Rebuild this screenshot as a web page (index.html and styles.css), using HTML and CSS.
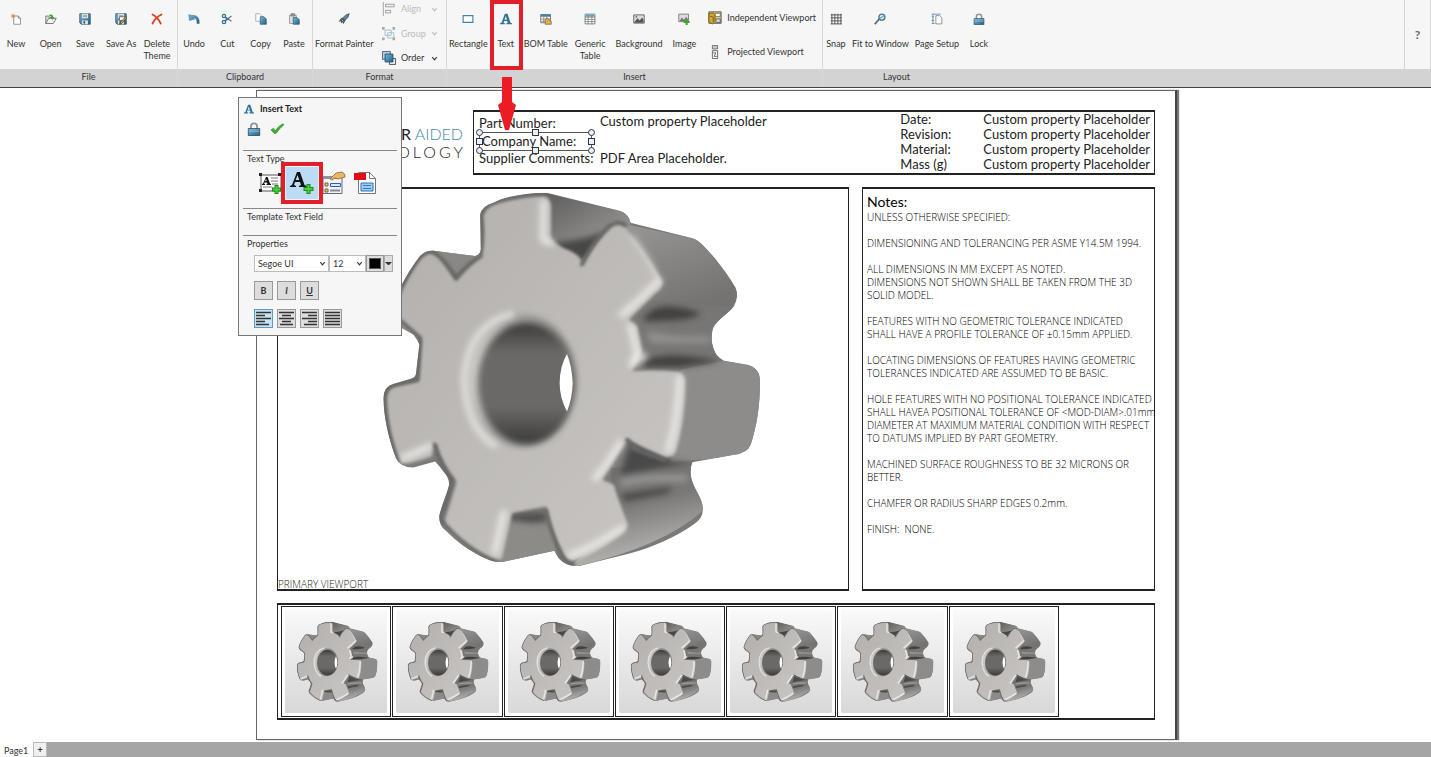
FILE: index.html
```html
<!DOCTYPE html>
<html lang="en">
<head>
    <meta charset="UTF-8">
    <meta name="viewport" content="width=device-width, initial-scale=1.0">
    <title>Template Editor</title>
    <link rel="stylesheet" href="styles.css">
</head>
<body>
    <svg class="defs" aria-hidden="true">
        <defs>
            <linearGradient id="blue" x1="0" y1="0" x2="1" y2="1">
                <stop offset="0" stop-color="#7fb9d6"/>
                <stop offset="1" stop-color="#1c5f86"/>
            </linearGradient>
            <linearGradient id="face" x1="0" y1="0" x2="1" y2="1">
                <stop offset="0" stop-color="#b1aeab"/>
                <stop offset="0.55" stop-color="#bfbcb9"/>
                <stop offset="1" stop-color="#c9c6c3"/>
            </linearGradient>
            <linearGradient id="side" x1="0" y1="0" x2="1" y2="1">
                <stop offset="0" stop-color="#5c5b59"/>
                <stop offset="0.6" stop-color="#868583"/>
                <stop offset="1" stop-color="#a3a19f"/>
            </linearGradient>
            <linearGradient id="tooth" x1="0" y1="0" x2="0.5" y2="1">
                <stop offset="0" stop-color="#9b9997"/>
                <stop offset="1" stop-color="#747371"/>
            </linearGradient>
            <linearGradient id="low" x1="0" y1="0" x2="0.3" y2="1">
                <stop offset="0" stop-color="#6a6967"/>
                <stop offset="0.5" stop-color="#7a7977"/>
                <stop offset="1" stop-color="#bab8b5"/>
            </linearGradient>
            <linearGradient id="bore" x1="0" y1="0" x2="0" y2="1">
                <stop offset="0" stop-color="#3b3a39"/>
                <stop offset="0.25" stop-color="#6a6967"/>
                <stop offset="0.7" stop-color="#6a6967"/>
                <stop offset="1" stop-color="#3b3a39"/>
            </linearGradient>
            <linearGradient id="bevel" x1="0" y1="0.3" x2="1" y2="0.5">
                <stop offset="0" stop-color="#d4d2cf"/>
                <stop offset="0.35" stop-color="#a09e9b"/>
                <stop offset="1" stop-color="#777572"/>
            </linearGradient>
            <filter id="soft4" x="-20%" y="-20%" width="140%" height="140%"><feGaussianBlur stdDeviation="4"/></filter>
            <filter id="soft9" x="-20%" y="-20%" width="140%" height="140%"><feGaussianBlur stdDeviation="9"/></filter>
            <clipPath id="outline">
                <path d="M300 90Q305 65 340 55C380 35 440 25 500 25L720 80Q745 90 750 115L930 160Q950 165 965 180C1010 225 1045 275 1065 310Q1075 340 1060 365C1040 390 1010 405 998 430Q988 460 998 490Q1005 515 1030 528L1100 540Q1138 550 1138 590C1138 660 1130 720 1110 780Q1100 805 1060 810L935 832Q925 860 935 890C945 920 965 940 967 970Q968 1000 940 1018C880 1060 820 1085 750 1105L600 1142Q560 1148 535 1120L522 1097L370 1130Q345 1135 320 1122C270 1100 230 1070 195 1035Q175 1020 178 990C185 960 200 930 207 900Q208 880 190 860Q175 840 165 830L100 848Q60 848 48 820C25 760 12 700 10 640Q12 605 40 598L90 583Q108 578 108 565L118 480Q112 465 100 450L65 430Q30 400 40 365C60 300 90 255 120 215Q135 198 160 199L285 215Q300 210 302 195Z"/>
            </clipPath>
        </defs>

        <!-- gear model, shared by the main viewport and the thumbnails -->
        <symbol id="gear" viewBox="0 14 1150 1150" preserveAspectRatio="xMidYMin">
            <g clip-path="url(#outline)">
                <rect width="1150" height="1160" fill="#7b7a78"/>
                <path d="M490 25L760 90L750 120Q700 120 665 150L610 190L500 170Z" fill="url(#side)"/>
                <path d="M690 110L950 165Q1030 250 1075 330L1040 385L940 365L830 350L840 290Z" fill="url(#tooth)"/>
                <path d="M780 345L1060 370L990 430L1010 530L760 540L740 400Z" fill="#777674"/>
                <path d="M900 555L1030 528L1145 550L1130 812L870 830Z" fill="#8d8c8a"/>
                <path d="M690 850L940 830L975 970Q850 1090 560 1150L700 1040Z" fill="url(#low)"/>
                <path d="M350 980L510 1000L530 1110L340 1140Z" fill="#8c8b88"/>
                <path d="M130 190L300 215L240 290Z" fill="#8a8886"/>
                <g filter="url(#soft9)">
                    <path d="M520 175Q620 165 680 140L620 230L540 200Z" fill="#474645"/>
                    <path d="M790 400Q830 340 960 385Q950 410 790 410Z" fill="#424140"/>
                    <path d="M800 440Q880 460 990 455V475L810 475Z" fill="#929190"/>
                    <path d="M790 530Q850 495 1020 530L900 548H790Z" fill="#424140"/>
                    <path d="M750 770L880 830L935 832Q830 850 720 870Z" fill="#4a4948"/>
                    <path d="M720 930Q800 915 880 905L860 925L735 950Z" fill="#484746"/>
                    <path d="M720 895Q800 875 920 880" fill="none" stroke="#a09e9b" stroke-width="16"/>
                    <path d="M385 985L495 985L505 1010Q440 1020 380 1000Z" fill="#4d4c4a"/>
                </g>
                <path d="M305 90Q320 55 350 52C400 35 450 32 490 35Q510 40 512 65L512 160Q530 185 570 200Q600 215 605 235C630 200 650 160 690 130Q715 110 735 130C780 185 820 240 845 290Q848 310 825 325L745 405L770 425L785 500L755 560Q830 555 895 562Q915 570 914 600C912 670 905 740 885 800Q875 820 850 815L740 765L665 885L700 900C710 940 730 980 742 1020Q735 1040 720 1050C670 1085 620 1120 570 1128Q550 1120 540 1095C520 1050 505 1000 495 965Q440 975 395 985L365 1120Q340 1130 320 1118C270 1095 220 1060 190 1020L230 890Q190 840 160 770L155 815Q100 835 65 835C35 770 20 700 20 640Q22 610 50 605L115 590L125 470L60 420Q35 395 50 360C70 300 100 250 130 210Q150 198 175 215L228 290L300 215Q310 160 305 90Z" fill="url(#face)" filter="url(#soft4)"/>
                <g fill="none" stroke="#f0eeeb" stroke-opacity=".85" stroke-width="20" stroke-linecap="round" stroke-linejoin="round" filter="url(#soft9)">
                    <path d="M490 55L488 165L510 175"/>
                    <path d="M835 290Q780 345 725 390M750 425L770 500L755 540L790 515"/>
                    <path d="M898 580C895 660 885 730 865 795"/>
                    <path d="M720 775Q690 825 645 880"/>
                    <path d="M725 1030Q640 1085 570 1112"/>
                    <path d="M370 985L345 1100"/>
                    <path d="M70 820L150 785"/>
                    <path d="M755 155Q800 210 830 275" stroke-width="8"/>
                </g>
                <g fill="none" stroke="#686664" stroke-width="12" stroke-linecap="round" filter="url(#soft4)">
                    <path d="M302 205Q310 150 303 95Q310 65 350 52Q420 32 490 28"/>
                    <path d="M605 240Q640 170 690 122Q715 108 735 122"/>
                    <path d="M228 280Q180 205 150 201Q120 205 90 260Q30 355 40 390L120 460L112 585L40 600Q12 610 12 650Q20 750 50 830"/>
                    <path d="M228 280Q260 240 302 215"/>
                    <path d="M165 780Q180 840 215 885Q205 940 178 1000Q250 1090 350 1132"/>
                    <path d="M497 975Q510 1040 540 1100Q550 1130 580 1140"/>
                    <path d="M755 790L850 825M740 765L780 800"/>
                </g>
                <ellipse cx="427" cy="588" rx="160" ry="198" fill="url(#bevel)" filter="url(#soft9)"/>
                <path d="M400 388Q258 420 252 590Q262 740 350 785" fill="none" stroke="#e4e2df" stroke-width="18" filter="url(#soft9)"/>
                <ellipse cx="437" cy="596" rx="143" ry="181" fill="url(#bore)" filter="url(#soft9)"/>
                <path d="M560 508Q575 545 577 595Q576 640 560 680Q538 640 538 595Q538 545 560 508Z" fill="#fff"/>
            </g>
        </symbol>

        <symbol id="i-new" viewBox="0 0 16 16">
            <path d="M5 4h6l3 3v8H5z" fill="#fff" stroke="#777"/>
            <path d="M11 4v3h3" fill="none" stroke="#777"/>
            <path d="M4 1v6M1 4h6M2 2l4 4M6 2L2 6" stroke="#c08a45"/>
        </symbol>
        <symbol id="i-open" viewBox="0 0 16 16">
            <path d="M1 14V4h4l1 2h5v3" fill="#ddd" stroke="#666"/>
            <path d="M1 14l4-7h10l-4 7z" fill="#f1f1f1" stroke="#555"/>
            <path d="M6 2q5-1 5 4h2l-3 3-3-3h2q0-2-3-2z" fill="#3a9c2d"/>
        </symbol>
        <symbol id="i-save" viewBox="0 0 16 16">
            <path d="M1 1h14v14H3l-2-2z" fill="url(#blue)" stroke="#2d4a5c"/>
            <path d="M4 1h8v6H4z" fill="#eee"/>
            <path d="M5 3h6M5 5h6" stroke="#777"/>
            <path d="M4 10h8v5H4z" fill="#ddd"/>
            <path d="M6 11h2v3H6z" fill="#244"/>
        </symbol>
        <symbol id="i-saveas" viewBox="0 0 16 16">
            <use href="#i-save"/>
            <path d="M6 5h7v5H6z" fill="#fff" stroke="#555"/>
            <path d="M14 5l-7 8-1 2 3-1 7-8z" fill="#e5b94b" stroke="#333"/>
        </symbol>
        <symbol id="i-delete" viewBox="0 0 16 16">
            <path d="M2 2q7 4 11 12M14 2Q6 6 2 14" fill="none" stroke="#d8401f" stroke-width="2.4" stroke-linecap="round"/>
        </symbol>
        <symbol id="i-undo" viewBox="0 0 16 16">
            <path d="M1 2l1 8 7-2-3-2q6-1 6 8h3Q16 2 4 3z" fill="url(#blue)" stroke="#2a6a8d" stroke-width=".6"/>
        </symbol>
        <symbol id="i-cut" viewBox="0 0 16 16">
            <path d="M5 5l9 6M5 11l9-7" stroke="#777" stroke-width="1.6"/>
            <circle cx="4" cy="4" r="2.2" fill="none" stroke="#2d7599" stroke-width="1.8"/>
            <circle cx="4" cy="12" r="2.2" fill="none" stroke="#2d7599" stroke-width="1.8"/>
            <path d="M6 6l4 3M6 10l4-3" stroke="#2d7599" stroke-width="2"/>
        </symbol>
        <symbol id="i-copy" viewBox="0 0 16 16">
            <path d="M1 1h5l3 3v7H1z" fill="#fff" stroke="#999"/>
            <path d="M7 5h5l3 3v7H7z" fill="url(#blue)" stroke="#2d5f7c"/>
        </symbol>
        <symbol id="i-paste" viewBox="0 0 16 16">
            <path d="M2 3h9v11H2z" fill="#ddd" stroke="#888"/>
            <path d="M4 1h5v3H4z" fill="#999" stroke="#777"/>
            <path d="M7 6h5l3 3v6H7z" fill="url(#blue)" stroke="#2d5f7c"/>
        </symbol>
        <symbol id="i-painter" viewBox="0 0 16 16">
            <path d="M15 1l-5 2-4 4 3 3 4-4z" fill="url(#blue)" stroke="#345"/>
            <path d="M6 6l4 4-3 5-1-3-2 2v-3l-3 1 2-4z" fill="#555"/>
            <path d="M5 9l2 2" stroke="#ddd"/>
        </symbol>
        <symbol id="i-align" viewBox="0 0 16 16">
            <path d="M1.500 0v16" stroke="#999"/>
            <path d="M4 2.500h10v3H4zM4 9.500h6v3H4z" fill="#eee" stroke="#999"/>
        </symbol>
        <symbol id="i-group" viewBox="0 0 16 16">
            <path d="M3.500 3.500h7v6h-7zM6.500 6.500h7v6h-7z" fill="none" stroke="#9bbccc"/>
            <path d="M0 0h3v3H0zM12 0h3v3h-3zM0 12h3v3H0zM12 12h3v3h-3z" fill="#aaa"/>
        </symbol>
        <symbol id="i-order" viewBox="0 0 16 16">
            <path d="M.5.500h9v9h-9z" fill="#b5d0e0" stroke="#456"/>
            <path d="M8.500 8.500h7v7h-7z" fill="#e8e8e8" stroke="#444"/>
            <path d="M3.500 3.500h9v9h-9z" fill="url(#blue)" stroke="#1d506e"/>
        </symbol>
        <symbol id="i-rect" viewBox="0 0 16 16">
            <path d="M1.500 3.500h13v9h-13z" fill="#fff" stroke="#3d85a8" stroke-width="1.500"/>
        </symbol>
        <symbol id="i-text" viewBox="0 0 16 16">
            <path d="M0 15v-1.500l2-.5L6.500 1h3.500l4 12 2 .5V15H8.500v-1.500l1.800-.5-.7-2.500H5.500L4.700 13l1.800.5V15zM6 9h3.200L7.800 4z" fill="#2f7397" fill-rule="evenodd"/>
        </symbol>
        <symbol id="i-bom" viewBox="0 0 16 16">
            <path d="M1 2h13v11H1z" fill="#fff" stroke="#555"/>
            <path d="M1 2h13v3H1z" fill="#3d85a8"/>
            <path d="M1 8h13M1 11h13M5 5v8M9 5v8" stroke="#777"/>
            <path d="M7 9l3-2 5 4v4H7z" fill="#e0b23c" stroke="#765"/>
        </symbol>
        <symbol id="i-table" viewBox="0 0 16 16">
            <path d="M1.500 1.500h13v13h-13z" fill="#fff" stroke="#666"/>
            <path d="M2 2h12v3H2z" fill="#63a4c2"/>
            <path d="M1 5.500h14M1 8.500h14M1 11.500h14M5.500 5v10M10.500 5v10" stroke="#777"/>
        </symbol>
        <symbol id="i-pic" viewBox="0 0 16 16">
            <path d="M1 2.500h14v11H1z" fill="#ddd" stroke="#444"/>
            <path d="M2 12l4-5 3 3 3-4 2 3v4H2z" fill="#555"/>
            <circle cx="4.500" cy="5" r="1.200" fill="#777"/>
        </symbol>
        <symbol id="i-image" viewBox="0 0 16 16">
            <path d="M1 1.500h13v10H1z" fill="#ddd" stroke="#666"/>
            <path d="M2 11l3-5 3 3 3-4 2 3v3z" fill="#777"/>
            <path d="M11.500 8v8M7.500 12h8" stroke="#3ba52e" stroke-width="2.600"/>
        </symbol>
        <symbol id="i-indep" viewBox="0 0 16 16">
            <path d="M1 1h14v13H1z" fill="#f3e3a5" stroke="#444"/>
            <path d="M8 2.500h6v4H8z" fill="#fff" stroke="#7d6523"/>
            <path d="M1 3l5-1 2 3v7l-3 3-4-3z" fill="#d5a82d" stroke="#745c1c"/>
            <path d="M2 6l4 1v6" fill="none" stroke="#745c1c"/>
            <path d="M9 9h5v4H9z" fill="#ddd" stroke="#555"/>
        </symbol>
        <symbol id="i-proj" viewBox="0 0 16 16">
            <path d="M5 .5h6v4H5z" fill="#bcd" stroke="#666"/>
            <path d="M5 6.500h6v9H5z" fill="#fff" stroke="#555"/>
            <path d="M6 9h3l-2 4h3" fill="none" stroke="#456"/>
        </symbol>
        <symbol id="i-snap" viewBox="0 0 16 16">
            <path d="M2.500 1v14M6.500 1v14M10.500 1v14M14.500 1v14M1 2.500h15M1 6.500h15M1 10.500h15M1 14.500h15" stroke="#333"/>
        </symbol>
        <symbol id="i-fit" viewBox="0 0 16 16">
            <path d="M1 15l6-7" stroke="#567" stroke-width="2.400"/>
            <circle cx="10.500" cy="5.500" r="4" fill="#d6e8f1" stroke="#4a7690" stroke-width="1.800"/>
            <path d="M8 7l5-3" stroke="#2f7397"/>
        </symbol>
        <symbol id="i-setup" viewBox="0 0 16 16">
            <path d="M6.500 3.500h5l3 3v8h-8z" fill="#fff" stroke="#777"/>
            <path d="M1 1.500h12M2.500 1v13M1 14h4M1 5h3M1 10h3" stroke="#4a819d"/>
        </symbol>
        <symbol id="i-lock" viewBox="0 0 16 16">
            <path d="M4.500 8V4.500q0-3 3.500-3t3.500 3V8" fill="none" stroke="#8a979e" stroke-width="2"/>
            <path d="M1.500 7.500h13v8h-13z" fill="url(#blue)" stroke="#2b5064"/>
            <path d="M2 9h12M2 11h12" stroke="#9cc6da" stroke-width=".7"/>
        </symbol>
        <symbol id="i-check" viewBox="0 0 16 14">
            <path d="M1 8l3-2 2 3q4-6 9-8l1 1q-6 5-9 10H5z" fill="#3fae35" stroke="#2b8a26" stroke-width=".6"/>
        </symbol>
        <symbol id="i-note" viewBox="0 0 24 24">
            <path d="M3 4h20v16H3z" fill="#fff" stroke="#555"/>
            <path d="M1 2h3v3H1zM20 2h3v3h-3zM1 18h3v3H1z" fill="#222"/>
            <path d="M13 7h7M13 10h7M14 13h6M5 16h9" stroke="#777"/>
            <path d="M4 14v-1l1-.5L8 6h1.500l2.500 6.500 1 .5v1H8.500v-1l1-.5-.5-1H6.500l-.5 1 1 .5v1zM7 10h1.700L8 8z" fill="#111" fill-rule="evenodd"/>
            <path d="M18.500 14v9M14 18.500h9" stroke="#1b8a1b" stroke-width="4"/>
            <path d="M18.500 15v7M15 18.500h7" stroke="#48d33c" stroke-width="2"/>
        </symbol>
        <symbol id="i-addtext" viewBox="0 0 24 24">
            <path d="M0 16v-1l2-1L7 1h3l4.500 13 2 1v1H9v-1l2-1-1-3H5l-1 3 2 1v1zM5.700 9h3.600L7.500 4z" fill="#111" fill-rule="evenodd"/>
            <path d="M18.500 13v10M13.500 18h10" stroke="#1b8a1b" stroke-width="4"/>
            <path d="M18.500 14v8M14.500 18h8" stroke="#48d33c" stroke-width="2"/>
        </symbol>
        <symbol id="i-prop" viewBox="0 0 24 24">
            <path d="M1 5.500h19v17H1z" fill="#f3f3f3" stroke="#667"/>
            <path d="M1 5h15v3H1z" fill="#8a93a8"/>
            <path d="M3 12h3v3H3zM3 18h3v3H3z" fill="#f3c73e" stroke="#666"/>
            <path d="M8.500 12.500h10v3h-10z" fill="#dbe9ff" stroke="#2a5cc0"/>
            <path d="M8 19.500h10" stroke="#889" stroke-width="2"/>
            <path d="M8 8l6-6 6-1q4 2 3 5l-7 2-3-1-3 2z" fill="#e4b868" stroke="#8b6427" stroke-width=".8"/>
        </symbol>
        <symbol id="i-pdf" viewBox="0 0 24 24">
            <path d="M5.500 1.500h11l6 6v15h-17z" fill="#fff" stroke="#777"/>
            <path d="M16.500 1.500v6h6" fill="none" stroke="#777"/>
            <path d="M1 2h12v7H1z" fill="#e30d17"/>
            <path d="M8 12h12v8H8z" fill="#9ed0f7" stroke="#2a6fb5"/>
            <path d="M10 14.500h8M10 17.500h8" stroke="#3a78b5"/>
        </symbol>
        <symbol id="i-left" viewBox="0 0 17 17"><path d="M1 2.500h15M1 5.500h9M1 8.500h15M1 11.500h9M1 14.500h13" stroke="#333" stroke-width="1.500"/></symbol>
        <symbol id="i-center" viewBox="0 0 17 17"><path d="M1 2.500h15M4 5.500h9M1 8.500h15M4 11.500h9M2 14.500h13" stroke="#333" stroke-width="1.500"/></symbol>
        <symbol id="i-right" viewBox="0 0 17 17"><path d="M1 2.500h15M7 5.500h9M1 8.500h15M7 11.500h9M3 14.500h13" stroke="#333" stroke-width="1.500"/></symbol>
        <symbol id="i-justify" viewBox="0 0 17 17"><path d="M1 2.500h15M1 5.500h15M1 8.500h15M1 11.500h15M1 14.500h15" stroke="#333" stroke-width="1.500"/></symbol>
        <symbol id="i-chevron" viewBox="0 0 8 8"><path d="M1.500 2.500L4 5.500l2.500-3" fill="none" stroke="currentColor" stroke-width="1.300"/></symbol>
    </svg>

    <header class="ribbon">
        <section class="group group-file">
            <div class="tools">
                <button class="tool"><svg><use href="#i-new"/></svg>New</button>
                <button class="tool"><svg><use href="#i-open"/></svg>Open</button>
                <button class="tool"><svg><use href="#i-save"/></svg>Save</button>
                <button class="tool"><svg><use href="#i-saveas"/></svg>Save As</button>
                <button class="tool"><svg><use href="#i-delete"/></svg><span>Delete<br>Theme</span></button>
            </div>
            <h2 class="group-name">File</h2>
        </section>
        <section class="group group-clipboard">
            <div class="tools">
                <button class="tool"><svg><use href="#i-undo"/></svg>Undo</button>
                <button class="tool"><svg><use href="#i-cut"/></svg>Cut</button>
                <button class="tool"><svg><use href="#i-copy"/></svg>Copy</button>
                <button class="tool"><svg><use href="#i-paste"/></svg>Paste</button>
            </div>
            <h2 class="group-name">Clipboard</h2>
        </section>
        <section class="group group-format">
            <div class="tools">
                <button class="tool"><svg><use href="#i-painter"/></svg>Format Painter</button>
                <div class="stack">
                    <button class="row-tool" disabled><svg><use href="#i-align"/></svg>Align <svg class="chevron"><use href="#i-chevron"/></svg></button>
                    <button class="row-tool" disabled><svg><use href="#i-group"/></svg>Group <svg class="chevron"><use href="#i-chevron"/></svg></button>
                    <button class="row-tool"><svg><use href="#i-order"/></svg>Order <svg class="chevron"><use href="#i-chevron"/></svg></button>
                </div>
            </div>
            <h2 class="group-name">Format</h2>
        </section>
        <section class="group group-insert">
            <div class="tools">
                <button class="tool"><svg><use href="#i-rect"/></svg>Rectangle</button>
                <div class="marked">
                    <button class="tool"><svg><use href="#i-text"/></svg>Text</button>
                    <svg class="arrow" viewBox="0 0 20 54"><path d="M5 0h10v25l4 3-7 25H8L1 28l4-3z" fill="#ec1c24"/></svg>
                </div>
                <button class="tool"><svg><use href="#i-bom"/></svg>BOM Table</button>
                <button class="tool tool-wide"><svg><use href="#i-table"/></svg><span>Generic<br>Table</span></button>
                <button class="tool tool-wide"><svg><use href="#i-pic"/></svg>Background</button>
                <button class="tool tool-wide"><svg><use href="#i-image"/></svg>Image</button>
                <div class="stack stack-wide">
                    <button class="row-tool"><svg><use href="#i-indep"/></svg>Independent Viewport</button>
                    <button class="row-tool"><svg><use href="#i-proj"/></svg>Projected Viewport</button>
                </div>
            </div>
            <h2 class="group-name">Insert</h2>
        </section>
        <section class="group group-layout">
            <div class="tools">
                <button class="tool tool-snap"><svg><use href="#i-snap"/></svg>Snap</button>
                <button class="tool"><svg><use href="#i-fit"/></svg>Fit to Window</button>
                <button class="tool"><svg><use href="#i-setup"/></svg>Page Setup</button>
                <button class="tool"><svg><use href="#i-lock"/></svg>Lock</button>
            </div>
            <h2 class="group-name">Layout</h2>
        </section>
        <div class="group group-help">
            <button class="help">?</button>
        </div>
    </header>

    <main class="workspace">
        <article class="page">
            <div class="title-block">
                <div class="logo"><div><b>R</b> <span>AIDED</span></div><div class="logo-sub">OLOGY</div></div>
                <div class="info frame">
                    <dl class="info-main">
                        <dt>Part Number:</dt><dd>Custom property Placeholder</dd>
                        <dt class="selected">Company Name:
                            <i class="handle round tl"></i><i class="handle tc"></i><i class="handle round tr"></i>
                            <i class="handle ml"></i><i class="handle mr"></i>
                            <i class="handle round bl"></i><i class="handle bc"></i><i class="handle round br"></i>
                        </dt><dd></dd>
                        <dt>Supplier Comments:</dt><dd>PDF Area Placeholder.</dd>
                    </dl>
                    <dl class="info-side">
                        <dt>Date:</dt><dd>Custom property Placeholder</dd>
                        <dt>Revision:</dt><dd>Custom property Placeholder</dd>
                        <dt>Material:</dt><dd>Custom property Placeholder</dd>
                        <dt>Mass (g)</dt><dd>Custom property Placeholder</dd>
                    </dl>
                </div>
            </div>
            <div class="middle">
                <figure class="viewport frame">
                    <svg class="model"><use href="#gear"/></svg>
                    <figcaption>PRIMARY VIEWPORT</figcaption>
                </figure>
                <section class="notes frame">
                    <h3>Notes:</h3>
                    <p>UNLESS OTHERWISE SPECIFIED:</p>
                    <p>DIMENSIONING AND TOLERANCING PER ASME Y14.5M 1994.</p>
                    <p>ALL DIMENSIONS IN MM EXCEPT AS NOTED.<br>DIMENSIONS NOT SHOWN SHALL BE TAKEN FROM THE 3D<br>SOLID MODEL.</p>
                    <p>FEATURES WITH NO GEOMETRIC TOLERANCE INDICATED<br>SHALL HAVE A PROFILE TOLERANCE OF ±0.15mm APPLIED.</p>
                    <p>LOCATING DIMENSIONS OF FEATURES HAVING GEOMETRIC<br>TOLERANCES INDICATED ARE ASSUMED TO BE BASIC.</p>
                    <p>HOLE FEATURES WITH NO POSITIONAL TOLERANCE INDICATED<br>SHALL HAVEA POSITIONAL TOLERANCE OF &lt;MOD-DIAM&gt;.01mm<br>DIAMETER AT MAXIMUM MATERIAL CONDITION WITH RESPECT<br>TO DATUMS IMPLIED BY PART GEOMETRY.</p>
                    <p>MACHINED SURFACE ROUGHNESS TO BE 32 MICRONS OR<br>BETTER.</p>
                    <p>CHAMFER OR RADIUS SHARP EDGES 0.2mm.</p>
                    <p>FINISH:&nbsp; NONE.</p>
                </section>
            </div>
            <div class="thumbs frame">
                <div class="thumb"><svg><use href="#gear"/></svg></div>
                <div class="thumb"><svg><use href="#gear"/></svg></div>
                <div class="thumb"><svg><use href="#gear"/></svg></div>
                <div class="thumb"><svg><use href="#gear"/></svg></div>
                <div class="thumb"><svg><use href="#gear"/></svg></div>
                <div class="thumb"><svg><use href="#gear"/></svg></div>
                <div class="thumb"><svg><use href="#gear"/></svg></div>
            </div>
        </article>

        <aside class="panel">
            <h2 class="panel-title"><svg><use href="#i-text"/></svg>Insert Text</h2>
            <div class="panel-actions">
                <button aria-label="Pin"><svg><use href="#i-lock"/></svg></button>
                <button aria-label="Accept"><svg><use href="#i-check"/></svg></button>
            </div>
            <section class="panel-section section-type">
                <h3>Text Type</h3>
                <div class="types">
                    <button aria-label="Note"><svg><use href="#i-note"/></svg></button>
                    <button class="active" aria-label="Text"><svg><use href="#i-addtext"/></svg></button>
                    <button aria-label="Property"><svg><use href="#i-prop"/></svg></button>
                    <button aria-label="PDF area"><svg><use href="#i-pdf"/></svg></button>
                </div>
            </section>
            <section class="panel-section section-field">
                <h3>Template Text Field</h3>
            </section>
            <section class="panel-section">
                <h3>Properties</h3>
                <div class="font-row">
                    <span class="select select-font"><select aria-label="Font"><option>Segoe UI</option></select><svg><use href="#i-chevron"/></svg></span>
                    <span class="select select-size"><select aria-label="Size"><option>12</option></select><svg><use href="#i-chevron"/></svg></span>
                    <button class="color" aria-label="Color"><span class="swatch"></span></button>
                    <button class="color-more" aria-label="More colors"></button>
                </div>
                <div class="button-row">
                    <button><b>B</b></button>
                    <button><b><em>I</em></b></button>
                    <button><b><u>U</u></b></button>
                </div>
                <div class="button-row">
                    <button class="on" aria-label="Align left"><svg><use href="#i-left"/></svg></button>
                    <button aria-label="Align center"><svg><use href="#i-center"/></svg></button>
                    <button aria-label="Align right"><svg><use href="#i-right"/></svg></button>
                    <button aria-label="Justify"><svg><use href="#i-justify"/></svg></button>
                </div>
            </section>
        </aside>
    </main>

    <footer class="tabs">
        <span class="tab">Page1</span>
        <button class="add-page" aria-label="Add page">+</button>
    </footer>
</body>
</html>
```
FILE: styles.css
```css
* {
    box-sizing: border-box;
}
body {
    margin: 0;
    height: 100vh;
    display: flex;
    flex-flow: column nowrap;
    overflow: hidden;
    background-color: #fff;
    color: #333;
    font-family: Lato, "Open Sans", sans-serif;
    font-size: 9px;
    line-height: 12px;
}
h2, h3, p, dl, dd, figure {
    margin: 0;
    font-size: inherit;
    font-weight: normal;
}
button, select {
    margin: 0;
    padding: 0;
    border: 0;
    background: none;
    color: inherit;
    font: inherit;
}
.defs {
    position: absolute;
    width: 0;
    height: 0;
}

.ribbon {
    display: flex;
    flex: none;
    height: 88px;
    border-bottom: 1px solid #444;
    background: linear-gradient(#f6f6f6 69px, #d3d3d3 69px);
}
.group {
    display: flex;
    flex-flow: column nowrap;
    border-right: 1px solid #d8d8d8;
}
.group-file {
    width: 178px;
}
.group-clipboard {
    width: 135px;
}
.group-format {
    width: 134px;
}
.group-insert {
    width: 376px;
}
.group-layout {
    width: 172px;
    padding-left: 1px;
    border-right: 0;
}
.tools {
    height: 69px;
    display: flex;
    justify-content: space-between;
}
.group-file .tools {
    padding-right: 4px;
}
.group-clipboard .tools {
    padding-right: 2px;
}
.group-insert .tools {
    justify-content: flex-start;
}
.group-name {
    padding-top: 2px;
    text-align: center;
}
.group-layout .group-name {
    padding-right: 26px;
}
.tool {
    min-width: 32px;
    padding: 13px 2px 0;
    display: flex;
    flex-flow: column nowrap;
    align-items: center;
    justify-content: flex-start;
    gap: 13px;
    height: 69px;
    white-space: nowrap;
}
.tool svg {
    flex: none;
    width: 12px;
    height: 12px;
}
.tool-snap {
    min-width: 24px;
}
.tool-wide {
    padding-inline: 5px;
}
.stack {
    display: flex;
    flex-flow: column nowrap;
    justify-content: space-between;
    width: 64px;
    padding: 2px 8px 4px 0;
}
.stack-wide {
    width: auto;
    margin-left: auto;
    padding: 11px 6px 10px 2px;
}
.row-tool {
    display: flex;
    align-items: center;
    gap: 5px;
    white-space: nowrap;
}
.row-tool svg {
    width: 14px;
    height: 14px;
}
.row-tool .chevron {
    width: 7px;
    height: 7px;
    margin-left: auto;
}
.row-tool:disabled {
    color: #bbb;
}
.marked {
    position: relative;
    z-index: 2;
}
.marked::after {
    content: "";
    position: absolute;
    inset: 0 -1px -1px 0;
    border: 4px solid #e01f2a;
    pointer-events: none;
}
.arrow {
    position: absolute;
    top: 77px;
    left: 7px;
    width: 20px;
    height: 54px;
}
.group-help {
    width: 27px;
    height: 69px;
    margin-left: auto;
    border-left: 1px solid #d3d3d3;
}
.help {
    height: 69px;
    color: #666;
    font-size: 12px;
    font-weight: bold;
}

.workspace {
    position: relative;
    flex: 1;
    min-height: 0;
    display: flex;
}
.page {
    flex: 1;
    margin: 2px 254px 2px 256px;
    padding: 19px 20px 19px 20px;
    display: flex;
    flex-flow: column nowrap;
    gap: 12px;
    border: 1px solid #666;
    border-right: 2px solid #444;
    box-shadow: 2px 0 1px #777;
    color: #222;
}
.frame {
    border: solid #222;
    border-width: 2px 1px;
}
.title-block {
    display: flex;
    gap: 10px;
    height: 65px;
}
.logo {
    width: 186px;
    padding-top: 15px;
    text-align: right;
    font-size: 16px;
    font-weight: 300;
    line-height: 18px;
}
.logo span {
    color: #4a86a4;
}
.logo-sub {
    letter-spacing: 3px;
    margin-right: -3px;
}
.info {
    flex: 1;
    display: flex;
    justify-content: space-between;
    padding: 0 4px 0 5px;
    font-size: 13px;
    line-height: 15px;
    white-space: nowrap;
}
.info-main {
    display: grid;
    grid-template: 20px 19px 16px / 121px auto;
}
.info-main dt:first-child {
    padding-top: 4px;
}
.info-main dd:nth-child(2) {
    padding-top: 2px;
}
.info-side {
    display: grid;
    grid-template-columns: 83px auto;
    grid-auto-rows: 15px;
}
.selected {
    position: relative;
    width: 113px;
    padding: 1px 2px;
    border: 1px solid #555;
}
.handle {
    position: absolute;
    width: 7px;
    height: 7px;
    border: 1px solid #334;
    background-color: #e8f1f8;
}
.round {
    border-radius: 50%;
}
.tl, .tc, .tr {
    top: -4px;
}
.ml, .mr {
    top: 5px;
}
.bl, .bc, .br {
    bottom: -4px;
}
.tl, .ml, .bl {
    left: -4px;
}
.tc, .bc {
    left: 52px;
}
.tr, .mr, .br {
    right: -4px;
}

.middle {
    flex: 1;
    min-height: 0;
    display: grid;
    grid-template-columns: 1fr 293px;
    gap: 13px;
}
.viewport {
    display: flex;
    flex-flow: column nowrap;
    align-items: center;
    min-height: 0;
}
.model {
    flex: 1;
    width: 384px;
    min-height: 0;
    margin-left: 17px;
}
.viewport figcaption {
    align-self: flex-start;
    font-family: "Open Sans", sans-serif;
    font-size: 10px;
    font-weight: 300;
    line-height: 10px;
}
.notes {
    padding: 4px;
    color: #000;
    font-family: "Open Sans", sans-serif;
    font-size: 10px;
    font-weight: 300;
    line-height: 13px;
    white-space: nowrap;
}
.notes h3 {
    font-family: Lato, sans-serif;
    font-size: 14px;
    line-height: 18px;
}
.notes p {
    margin-bottom: 13px;
    font-weight: 300;
}
.thumbs {
    height: 117px;
    padding: 1px 95px 1px 3px;
    display: grid;
    grid-template-columns: repeat(7, 1fr);
    grid-template-rows: 100%;
    gap: 1px;
}
.thumb {
    min-height: 0;
    padding: 3px;
    border: 1px solid #222;
    display: flex;
}
.thumb svg {
    width: 100%;
    height: 100%;
    padding: 11px 9px 9px 11px;
    border-radius: 2px;
    background: linear-gradient(#f9f9f9, #d8d8d8);
}

.panel {
    position: absolute;
    top: 9px;
    left: 238px;
    width: 164px;
    padding: 5px 4px;
    border: 1px solid #777;
    background-color: #f6f6f6;
}
.panel-title {
    display: flex;
    align-items: center;
    gap: 6px;
    font-weight: bold;
    color: #222;
}
.panel-title svg {
    width: 10px;
    height: 10px;
    margin-left: 1px;
}
.panel-actions {
    display: flex;
    gap: 9px;
    padding: 7px 4px 14px;
}
.panel-actions svg {
    display: block;
    width: 14px;
    height: 14px;
}
.panel-section {
    border-top: 1px solid #888;
    padding: 2px 4px;
}
.section-type {
    height: 58px;
}
.section-field {
    height: 27px;
}
.types {
    display: flex;
    align-items: center;
    gap: 4px;
    height: 36px;
    padding-left: 11px;
}
.types svg {
    display: block;
    width: 24px;
    height: 24px;
}
.types button:nth-child(3) {
    margin-right: 3px;
}
.types .active {
    position: relative;
    padding: 4px;
    background-color: #bcdcf5;
}
.types .active::after {
    content: "";
    position: absolute;
    inset: -5px;
    border: 4px solid #e01f2a;
}
.font-row {
    display: flex;
    align-items: stretch;
    height: 17px;
    margin: 5px 0 9px 7px;
}
.select {
    position: relative;
    border: 1px solid #bbb;
    background-color: #fff;
}
.select select {
    width: 100%;
    height: 15px;
    padding-left: 3px;
    appearance: none;
}
.select svg {
    position: absolute;
    top: 4px;
    right: 2px;
    width: 7px;
    height: 7px;
    pointer-events: none;
}
.select-font {
    width: 75px;
}
.select-size {
    width: 37px;
}
.color {
    width: 18px;
    padding: 2px;
    border: 1px solid #999;
    background-color: #ddd;
}
.swatch {
    display: block;
    height: 11px;
    border: 1px solid #555;
    background-color: #000;
}
.color-more {
    width: 9px;
    border: 1px solid #aaa;
    background-color: #ddd;
}
.color-more::after {
    content: "";
    display: block;
    border: 3px solid transparent;
    border-top-color: #333;
    border-bottom: 0;
}
.button-row {
    display: flex;
    gap: 4px;
    margin: 0 0 9px 7px;
}
.button-row:last-child {
    margin-bottom: 0;
}
.button-row button {
    width: 19px;
    height: 19px;
    border: 1px solid #999;
    background-color: #ddd;
}
.button-row .on {
    border-color: #5b9bc0;
    background-color: #c9e3f3;
}
.button-row svg {
    display: block;
    width: 17px;
    height: 17px;
}

.tabs {
    flex: none;
    height: 15px;
    display: flex;
    background-color: #a5a5a5;
}
.tab {
    width: 33px;
    padding: 3px 0 0 4px;
    background-color: #fff;
}
.add-page {
    width: 14px;
    border: 1px solid #bbb;
    background-color: #f0f0f0;
    font-weight: bold;
}
```
